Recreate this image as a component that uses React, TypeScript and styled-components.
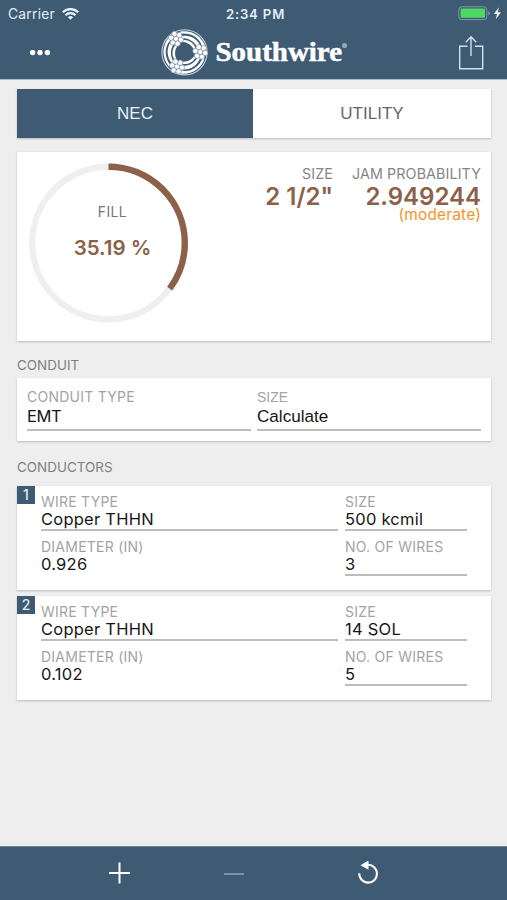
import React from "react";
import styled, { createGlobalStyle } from "styled-components";

const NAVY = "#3f5b74";
const BROWN = "#8b614a";

const GlobalStyle = createGlobalStyle`
  *, *::before, *::after { box-sizing: border-box; }
  body { margin: 0; background: #eeeeee; font-family: Inter, "Liberation Sans", sans-serif; }
`;

const Screen = styled.div`
  width: 507px;
  height: 900px;
  display: flex;
  flex-direction: column;
  background: #eeeeee;
  overflow: hidden;
`;

const Header = styled.header`
  height: 80px;
  flex: none;
  background: ${NAVY};
  border-bottom: 1px solid #a9bcc8;
  color: #fff;
`;

const StatusBar = styled.div`
  height: 27px;
  display: grid;
  grid-template-columns: 1fr auto 1fr;
  align-items: center;
  padding: 0 5px 0 8px;
  color: #e3edf5;
`;

const Carrier = styled.div`
  display: flex;
  align-items: center;
  gap: 7px;
  font-size: 13.8px;
  letter-spacing: 0.25px;
`;

const Clock = styled.div`
  padding-left: 1px;
  font-size: 13.2px;
  font-weight: 600;
  letter-spacing: 0.8px;
`;

const Battery = styled.div`
  display: flex;
  justify-content: flex-end;
`;

const NavBar = styled.div`
  height: 52px;
  display: grid;
  grid-template-columns: 1fr 190px 1fr;
  align-items: center;
`;

const MenuButton = styled.button`
  justify-self: start;
  margin-left: 29px;
  padding: 0;
  border: 0;
  background: none;
  display: flex;
`;

const ShareButton = styled(MenuButton)`
  justify-self: end;
  margin: 0 23px 0 0;
`;

const Main = styled.main`
  flex: 1;
  padding: 9px 16px 0 17px;
`;

const Panel = styled.section`
  background: #fff;
  box-shadow: 0 1px 2px rgba(0, 0, 0, 0.22);
`;

const Tabs = styled(Panel)`
  height: 49px;
  display: grid;
  grid-template-columns: 236px 1fr;
`;

const Tab = styled.button<{ $active?: boolean }>`
  border: 0;
  padding: 0;
  background: ${(p) => (p.$active ? NAVY : "#fff")};
  color: ${(p) => (p.$active ? "#e8eff5" : "#666")};
  font: 17px "Liberation Sans", Arial, sans-serif;
`;

const Summary = styled(Panel)`
  margin-top: 13.5px;
  height: 189px;
  display: flex;
  justify-content: space-between;
  padding: 11.5px 10px 0 12px;
`;

const Gauge = styled.div`
  width: 160px;
  height: 160px;
  display: grid;
  & > * { grid-area: 1 / 1; }
`;

const GaugeText = styled.div`
  display: flex;
  flex-direction: column;
  align-items: center;
  padding: 39px 0 0 7px;
`;

const FillLabel = styled.span`
  font-size: 13.8px;
  line-height: 20px;
  letter-spacing: 0.45px;
  color: #757575;
`;

const FillValue = styled.span`
  margin-top: 14px;
  font-size: 20.5px;
  font-weight: 600;
  line-height: 24px;
  color: ${BROWN};
`;

const Results = styled.div`
  display: flex;
  gap: 19px;
  padding-top: 1px;
`;

const Result = styled.div`
  display: flex;
  flex-direction: column;
  align-items: flex-end;
`;

const ResultLabel = styled.span`
  font-size: 14.3px;
  line-height: 20px;
  letter-spacing: 0.1px;
  color: #858585;
`;

const ResultValue = styled.span`
  margin-top: 1px;
  font-size: 24px;
  line-height: 24px;
  font-weight: 600;
  color: ${BROWN};
`;

const ResultNote = styled.span`
  font-size: 15.5px;
  line-height: 16px;
  margin-top: -2px;
  letter-spacing: 0.15px;
  color: #f79428;
`;

const SectionTitle = styled.h2<{ $top: number }>`
  margin: ${(p) => p.$top}px 0 0;
  height: 20px;
  font-size: 13.4px;
  font-weight: 400;
  line-height: 20px;
  letter-spacing: 0.03px;
  color: #808080;
`;

const ConduitCard = styled(Panel)`
  margin-top: 3px;
  height: 63px;
  display: grid;
  grid-template-columns: 224px 224px;
  column-gap: 6px;
  padding: 10px 10px 0;
`;

const Field = styled.div<{ $compact?: boolean; $plain?: boolean }>`
  height: ${(p) => (p.$compact ? 38 : 43)}px;
  display: flex;
  flex-direction: column;
  border-bottom: 2px solid ${(p) => (p.$plain ? "transparent" : "#bdbdbd")};
`;

const FieldLabel = styled.span<{ $helvetica?: boolean }>`
  font-family: ${(p) => (p.$helvetica ? '"Liberation Sans", Arial, sans-serif' : "inherit")};
  font-size: 14px;
  line-height: 18px;
  letter-spacing: ${(p) => (p.$helvetica ? 0 : 0.24)}px;
  color: #a3a3a3;
`;

const FieldValue = styled.span<{ $helvetica?: boolean; $tight?: boolean; $compact?: boolean }>`
  font-family: ${(p) => (p.$helvetica ? '"Liberation Sans", Arial, sans-serif' : "inherit")};
  font-size: ${(p) => (p.$helvetica ? 17.1 : 16.5)}px;
  line-height: ${(p) => (p.$compact ? 17 : p.$helvetica ? 22 : 20)}px;
  letter-spacing: ${(p) => (p.$helvetica ? 0 : p.$tight ? -0.35 : 0.24)}px;
  color: #161616;
`;

const ConductorCard = styled(Panel)<{ $top: number }>`
  margin-top: ${(p) => p.$top}px;
  height: 103.5px;
  display: flex;
`;

const Badge = styled.div`
  flex: none;
  width: 18px;
  height: 18px;
  margin-right: 6px;
  background: ${NAVY};
  color: #dfeaf3;
  font-size: 14px;
  font-weight: 500;
  line-height: 18px;
  text-align: center;
`;

const ConductorFields = styled.div`
  display: grid;
  grid-template-columns: 297px 122px;
  grid-template-rows: 38px 38px;
  gap: 7px;
  padding-top: 7px;
`;

const Footer = styled.footer`
  height: 54px;
  flex: none;
  background: ${NAVY};
  border-top: 1px solid #6d8293;
  display: flex;
  align-items: center;
  padding-left: 108px;
`;

const Action = styled.button<{ $gap?: number }>`
  border: 0;
  padding: 0;
  margin-left: ${(p) => p.$gap ?? 0}px;
  background: none;
  display: flex;
`;

const strands = [[0, 0], [4.9, 1], [3.3, -3.8], [-1.6, -4.8], [-4.9, -1], [-3.3, 3.8], [1.6, 4.8]];

const Cluster = ({ x, y }: { x: number; y: number }) => (
  <g fill="#fff" stroke="#6f8599" strokeWidth=".6">
    {strands.map(([dx, dy]) => (
      <circle key={`${dx},${dy}`} cx={x + dx} cy={y + dy} r="2.65" />
    ))}
  </g>
);

const Logo = () => (
  <svg width="190" height="52" viewBox="159 27 190 52">
    <circle cx="184.5" cy="52.3" r="22.6" fill="none" stroke="#c9d5df" strokeWidth="1.1" />
    {[0, 120, 240].map((a) => (
      <g key={a} transform={`rotate(${a} 184.5 52.3)`} fill="#fff">
        <path d="M180 31.800C191 29.500 202 36 205.500 47L202 46C199 37 191 32.500 180 33.600Z" />
        <path d="M180 36.200C190 34 198 39 201 47L197 47.500C194.500 41 188.500 37.800 180 38Z" />
        <path d="M181 40.500C187.500 39 193 42 195.500 48L193.500 49C191 44.500 187 42 181 41.800Z" />
      </g>
    ))}
    <Cluster x={176} y={38.8} />
    <Cluster x={200.3} y={52} />
    <Cluster x={177} y={66.5} />
    <text x="215.5" y="61" textLength="126.5" lengthAdjust="spacingAndGlyphs" fontFamily="Liberation Serif" fontWeight="700" fontSize="27.5" fill="#fff" stroke="#fff" strokeWidth=".5">
      Southwire
    </text>
    <circle cx="344.5" cy="45.5" r="2.6" fill="#8fa6bb" />
  </svg>
);

const Ring = () => (
  <svg width="160" height="160" viewBox="0 0 160 160" fill="none" strokeWidth="6.4">
    <circle cx="79.5" cy="80" r="76.3" stroke="#efefef" />
    <circle cx="79.5" cy="80" r="76.3" stroke={BROWN} pathLength="100" strokeDasharray="35.19 100" transform="rotate(-90 79.5 80)" />
  </svg>
);

const conductors = [
  { wire: "Copper THHN", size: "500 kcmil", diameter: "0.926", count: "3" },
  { wire: "Copper THHN", size: "14 SOL", diameter: "0.102", count: "5" },
];

export default function App() {
  return (
    <Screen>
      <GlobalStyle />
      <Header>
        <StatusBar>
          <Carrier>
            Carrier
            <svg width="17" height="12" viewBox="0 0 17 12" fill="none" stroke="#e9f2f8" strokeWidth="2.3">
              <path d="M.8 4.3a10.800 10.800 0 0 1 15.400 0M3.500 7.300a7 7 0 0 1 10 0" />
              <path d="M8.500 11.800 5.900 9.300a3.700 3.700 0 0 1 5.200 0Z" fill="#e9f2f8" stroke="none" />
            </svg>
          </Carrier>
          <Clock>2:34 PM</Clock>
          <Battery>
            <svg width="44" height="15" viewBox="0 0 44 15">
              <rect x=".8" y=".8" width="28" height="12.8" rx="3" fill="none" stroke="#8498a9" />
              <rect x="2.6" y="2.6" width="24.4" height="9.2" rx="1.2" fill="#4cd964" />
              <path d="M30.300 5v4.500q1.500-.6 1.500-2.200T30.300 5" fill="#8498a9" />
              <path d="M41 1.300 35.800 8h3.200l-1.200 5.300 5.200-7h-3.200Z" fill="#e9f2f8" />
            </svg>
          </Battery>
        </StatusBar>
        <NavBar>
          <MenuButton aria-label="Menu">
            <svg width="22" height="6" viewBox="0 0 22 6" fill="#fff">
              <circle cx="3.6" cy="2.5" r="2.7" />
              <circle cx="11" cy="2.5" r="2.7" />
              <circle cx="18.4" cy="2.5" r="2.7" />
            </svg>
          </MenuButton>
          <Logo />
          <ShareButton aria-label="Share">
            <svg width="26" height="36" viewBox="0 0 26 36" fill="none" stroke="#d3e1ec" strokeWidth="1.4">
              <path d="M9.500 11.200H1.700v22.600h23V11.200h-7.800M13 21V2M7.800 7.200 13 1.700l5.200 5.500" />
            </svg>
          </ShareButton>
        </NavBar>
      </Header>
      <Main>
        <Tabs>
          <Tab $active>NEC</Tab>
          <Tab>UTILITY</Tab>
        </Tabs>
        <Summary>
          <Gauge>
            <Ring />
            <GaugeText>
              <FillLabel>FILL</FillLabel>
              <FillValue>35.19 %</FillValue>
            </GaugeText>
          </Gauge>
          <Results>
            <Result>
              <ResultLabel>SIZE</ResultLabel>
              <ResultValue>2 1/2"</ResultValue>
            </Result>
            <Result>
              <ResultLabel>JAM PROBABILITY</ResultLabel>
              <ResultValue>2.949244</ResultValue>
              <ResultNote>(moderate)</ResultNote>
            </Result>
          </Results>
        </Summary>
        <SectionTitle $top={14}>CONDUIT</SectionTitle>
        <ConduitCard>
          <Field>
            <FieldLabel>CONDUIT TYPE</FieldLabel>
            <FieldValue $tight>EMT</FieldValue>
          </Field>
          <Field>
            <FieldLabel $helvetica>SIZE</FieldLabel>
            <FieldValue $helvetica>Calculate</FieldValue>
          </Field>
        </ConduitCard>
        <SectionTitle $top={16.5}>CONDUCTORS</SectionTitle>
        {conductors.map((c, i) => (
          <ConductorCard key={i} $top={i ? 6.5 : 9}>
            <Badge>{i + 1}</Badge>
            <ConductorFields>
              <Field $compact>
                <FieldLabel>WIRE TYPE</FieldLabel>
                <FieldValue $compact>{c.wire}</FieldValue>
              </Field>
              <Field $compact>
                <FieldLabel>SIZE</FieldLabel>
                <FieldValue $compact>{c.size}</FieldValue>
              </Field>
              <Field $compact $plain>
                <FieldLabel>DIAMETER (IN)</FieldLabel>
                <FieldValue $compact>{c.diameter}</FieldValue>
              </Field>
              <Field $compact>
                <FieldLabel>NO. OF WIRES</FieldLabel>
                <FieldValue $compact>{c.count}</FieldValue>
              </Field>
            </ConductorFields>
          </ConductorCard>
        ))}
      </Main>
      <Footer>
        <Action aria-label="Add">
          <svg width="24" height="24" viewBox="0 0 24 24" stroke="#fff" strokeWidth="2">
            <path d="M1 11h21M11.500 .5v21" />
          </svg>
        </Action>
        <Action aria-label="Remove" $gap={92}>
          <svg width="20" height="24" viewBox="0 0 20 24" stroke="#819bb0" strokeWidth="1.8">
            <path d="M0 12h20" />
          </svg>
        </Action>
        <Action aria-label="Reset" $gap={113}>
          <svg width="22" height="26" viewBox="0 0 22 26">
            <path d="M2.200 12.300a8.900 8.900 0 1 0 8.900-8.500" fill="none" stroke="#fff" strokeWidth="2.1" />
            <path d="M11.500 -.5v9.300L3.500 4.200Z" fill="#fff" />
          </svg>
        </Action>
      </Footer>
    </Screen>
  );
}
